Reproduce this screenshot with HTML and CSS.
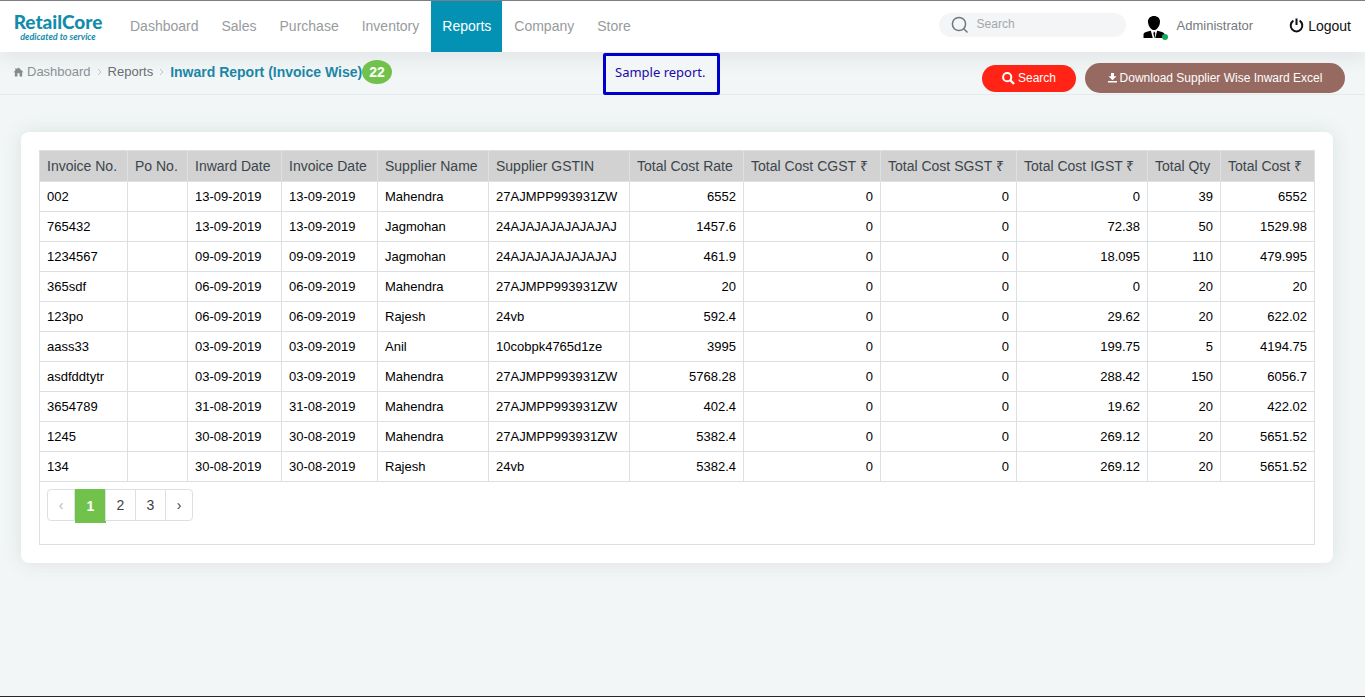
FILE: index.html
```html
<!DOCTYPE html>
<html lang="en">
<head>
<meta charset="utf-8">
<meta name="viewport" content="width=device-width, initial-scale=1">
<title>RetailCore - Inward Report</title>
<link rel="stylesheet" href="styles.css">
</head>
<body>
<header class="topbar">
  <a class="logo" href="#"><span class="logo-name">RetailCore</span><span class="logo-tag">dedicated to service</span></a>
  <nav class="nav">
    <a href="#">Dashboard</a><a href="#">Sales</a><a href="#">Purchase</a><a href="#">Inventory</a><a class="active" href="#">Reports</a><a href="#">Company</a><a href="#">Store</a>
  </nav>
  <label class="searchbox">
    <svg width="18" height="18" viewBox="0 0 18 18" fill="none" stroke="#70787d" stroke-width="1.5" aria-hidden="true"><circle cx="8" cy="8" r="6.6"/><path d="M12.8 12.8L16.5 16.5"/></svg>
    <input type="text" placeholder="Search" aria-label="Search">
  </label>
  <a class="user" href="#">
    <span class="avatar">
      <svg width="25" height="25" viewBox="0 0 25 25" aria-hidden="true"><path d="M11 1C7.400 1 4.900 3.300 5 6.800c.1 2.900 1.200 5.300 3 6.900.8.800 1.900 1.300 3 1.300s2.200-.5 3-1.300c1.800-1.600 2.900-4 3-6.900C17.100 3.300 14.600 1 11 1z"/><path d="M.5 23v-3c0-1.800.9-2.600 2.500-3l4.500-1.300L11 17l3.500-1.300L19 17c1.600.4 2.500 1.200 2.500 3v3z"/><path d="M7.800 15.600l2 7.400h1.500L10.300 18l.7-1-1-1zM14.200 15.600l-2 7.400h-.6L12.300 18l-.7-1 .8-1z" fill="#fff"/></svg>
      <span class="status"></span>
    </span>
    Administrator
  </a>
  <a class="logout" href="#">
    <svg width="15" height="15" viewBox="0 0 15 15" fill="none" stroke="#111" stroke-width="2" aria-hidden="true"><path d="M4.400 2.700a5.800 5.800 0 1 0 6.200 0M7.500.5v6.500"/></svg>
    Logout
  </a>
</header>
<section class="subbar">
  <nav class="crumbs" aria-label="Breadcrumb">
    <a class="home" href="#"><svg width="11" height="10" viewBox="0 0 12 11" fill="#848b8f" aria-hidden="true"><path d="M6 .5L11.500 5.700H10V10.500H7.200V7H4.800v3.500H2V5.700H.5L2.500 3.800V1.500H4v1z"/></svg>Dashboard</a>
    <svg class="sep" width="5" height="8" viewBox="0 0 5 8" aria-hidden="true"><path d="M1 1l3 3-3 3"/></svg>
    <a class="dark" href="#">Reports</a>
    <svg class="sep" width="5" height="8" viewBox="0 0 5 8" aria-hidden="true"><path d="M1 1l3 3-3 3"/></svg>
    <h1 class="title">Inward Report (Invoice Wise)</h1><span class="count">22</span>
  </nav>
  <div class="note">Sample report.</div>
  <div class="actions">
    <button class="btn btn-search" type="button"><svg width="13" height="13" viewBox="0 0 13 13" fill="none" stroke="#fff" stroke-width="2" aria-hidden="true"><circle cx="5.200" cy="5.200" r="4.100"/><path d="M8.200 8.200l3.800 3.800" stroke-width="2.400"/></svg>Search</button>
    <button class="btn btn-download" type="button"><svg width="9" height="10" viewBox="0 0 9 10" fill="#fff" aria-hidden="true"><path d="M3 0h3v3.300h2.500L4.500 7.300.5 3.300H3zM0 8h9v1.500H0z"/></svg>Download Supplier Wise Inward Excel</button>
  </div>
</section>
<main class="main">
  <div class="card">
    <table class="report">
      <colgroup><col class="w88"><col class="w60"><col class="w94"><col class="w96"><col class="w111"><col class="w141"><col class="w114"><col class="w137"><col class="w136"><col class="w131"><col class="w73"><col class="w94"></colgroup>
      <thead><tr><th>Invoice No.</th><th>Po No.</th><th>Inward Date</th><th>Invoice Date</th><th>Supplier Name</th><th>Supplier GSTIN</th><th>Total Cost Rate</th><th>Total Cost CGST ₹</th><th>Total Cost SGST ₹</th><th>Total Cost IGST ₹</th><th>Total Qty</th><th>Total Cost ₹</th></tr></thead>
      <tbody>
        <tr><td>002</td><td></td><td>13-09-2019</td><td>13-09-2019</td><td>Mahendra</td><td>27AJMPP993931ZW</td><td>6552</td><td>0</td><td>0</td><td>0</td><td>39</td><td>6552</td></tr>
        <tr><td>765432</td><td></td><td>13-09-2019</td><td>13-09-2019</td><td>Jagmohan</td><td>24AJAJAJAJAJAJAJ</td><td>1457.6</td><td>0</td><td>0</td><td>72.38</td><td>50</td><td>1529.98</td></tr>
        <tr><td>1234567</td><td></td><td>09-09-2019</td><td>09-09-2019</td><td>Jagmohan</td><td>24AJAJAJAJAJAJAJ</td><td>461.9</td><td>0</td><td>0</td><td>18.095</td><td>110</td><td>479.995</td></tr>
        <tr><td>365sdf</td><td></td><td>06-09-2019</td><td>06-09-2019</td><td>Mahendra</td><td>27AJMPP993931ZW</td><td>20</td><td>0</td><td>0</td><td>0</td><td>20</td><td>20</td></tr>
        <tr><td>123po</td><td></td><td>06-09-2019</td><td>06-09-2019</td><td>Rajesh</td><td>24vb</td><td>592.4</td><td>0</td><td>0</td><td>29.62</td><td>20</td><td>622.02</td></tr>
        <tr><td>aass33</td><td></td><td>03-09-2019</td><td>03-09-2019</td><td>Anil</td><td>10cobpk4765d1ze</td><td>3995</td><td>0</td><td>0</td><td>199.75</td><td>5</td><td>4194.75</td></tr>
        <tr><td>asdfddtytr</td><td></td><td>03-09-2019</td><td>03-09-2019</td><td>Mahendra</td><td>27AJMPP993931ZW</td><td>5768.28</td><td>0</td><td>0</td><td>288.42</td><td>150</td><td>6056.7</td></tr>
        <tr><td>3654789</td><td></td><td>31-08-2019</td><td>31-08-2019</td><td>Mahendra</td><td>27AJMPP993931ZW</td><td>402.4</td><td>0</td><td>0</td><td>19.62</td><td>20</td><td>422.02</td></tr>
        <tr><td>1245</td><td></td><td>30-08-2019</td><td>30-08-2019</td><td>Mahendra</td><td>27AJMPP993931ZW</td><td>5382.4</td><td>0</td><td>0</td><td>269.12</td><td>20</td><td>5651.52</td></tr>
        <tr><td>134</td><td></td><td>30-08-2019</td><td>30-08-2019</td><td>Rajesh</td><td>24vb</td><td>5382.4</td><td>0</td><td>0</td><td>269.12</td><td>20</td><td>5651.52</td></tr>
      </tbody>
      <tfoot><tr><td class="pager-cell" colspan="12">
        <nav class="pager" aria-label="Pages"><button class="edge" type="button" disabled>‹</button><button class="current" type="button">1</button><button type="button">2</button><button type="button">3</button><button class="edge" type="button">›</button></nav>
      </td></tr></tfoot>
    </table>
  </div>
</main>
<div class="baseline"></div>
</body>
</html>
```
FILE: styles.css
```css
* { box-sizing: border-box; }
body {
  margin: 0;
  min-height: 100vh;
  display: flex;
  flex-direction: column;
  background: #f2f6f7;
  border-top: 1px solid #7b7e84;
  font: 14px/20px "Liberation Sans", Arial, sans-serif;
  color: #111;
}
a { color: inherit; text-decoration: none; }
button, input { font: inherit; }
.topbar {
  position: relative;
  z-index: 1;
  display: flex;
  align-items: center;
  height: 51px;
  padding: 0 14px;
  background: #fff;
  box-shadow: 0 8px 16px rgba(60, 70, 70, 0.08);
}
.logo { display: flex; flex-direction: column; align-items: center; width: 88px; color: #118cab; white-space: nowrap; }
.logo-name { font: 900 19px/20px Lato, sans-serif; }
.logo-tag { font: italic bold 9px/9px Lato, sans-serif; }
.nav { display: flex; gap: 1px; align-self: stretch; align-items: center; margin-left: 17px; color: #979b9d; }
.nav a { padding: 0 11px; line-height: 51px; }
.nav .active { background: #0492b4; color: #fff; }
.searchbox {
  display: flex;
  align-items: center;
  gap: 8px;
  width: 187px;
  height: 24px;
  margin: 0 17px 4px auto;
  padding: 0 12px;
  border-radius: 12px;
  background: #f3f5f7;
}
.searchbox svg { flex: none; }
.searchbox input { width: 100%; min-width: 0; height: 20px; padding: 0 0 2px; border: 0; outline: 0; background: none; font-size: 12px; color: #444; }
.searchbox input::placeholder { color: #a3a7aa; opacity: 1; }
.user { display: flex; align-items: center; gap: 9px; padding-bottom: 1px; color: #74797c; font-size: 13px; }
.avatar { position: relative; display: flex; padding-top: 2px; }
.status { position: absolute; right: 0; bottom: 0; width: 6px; height: 6px; border-radius: 50%; background: #12ab5c; }
.logout { display: flex; align-items: center; gap: 4px; margin-left: 36px; padding-bottom: 2px; }
.subbar {
  position: relative;
  z-index: 2;
  display: flex;
  justify-content: space-between;
  height: 43px;
  padding: 0 20px 0 13px;
  border-bottom: 1px solid #e6eaec;
}
.crumbs { display: flex; align-items: center; height: 40px; color: #8b9194; font-size: 13px; white-space: nowrap; }
.crumbs .home { display: flex; align-items: center; gap: 3px; }
.crumbs .dark { color: #686e72; }
.sep { margin: 0 6px; fill: none; stroke: #bfc6ca; }
.title { margin: 0; color: #1b86a6; font-size: 14px; line-height: 20px; }
.count { padding: 2px 7px; border-radius: 50%; background: #71c24b; color: #fff; font-size: 14px; font-weight: bold; }
.note {
  position: absolute;
  left: 603px;
  top: 1px;
  padding: 6px 11px 10px 9px;
  border: 3px solid #0000cd;
  border-radius: 2px;
  background: #f2f6f7;
  color: #1a0aa8;
  font: 13px/20px "Noto Sans", sans-serif;
}
.actions { display: flex; align-items: center; gap: 9px; height: 52px; }
.btn { display: flex; align-items: center; justify-content: center; border: 0; border-radius: 15px; color: #fff; font-size: 12px; white-space: nowrap; }
.btn-search { width: 94px; height: 27px; gap: 3px; background: #ff2415; }
.btn-download { width: 260px; height: 30px; gap: 3px; background: #966a61; }
.main { flex: 1; padding: 37px 32px 24px 21px; }
.card { padding: 18px; border-radius: 8px; background: #fff; box-shadow: 0 0 20px rgba(60, 70, 70, 0.12); }
.report { width: 100%; border-collapse: collapse; white-space: nowrap; table-layout: fixed; }
.report th, .report td { height: 30px; padding: 0 7px; border: 1px solid #dde0e2; text-align: left; font-size: 13px; line-height: 20px; color: #000; }
.report th { height: 31px; background: #d2d2d2; color: #3c454b; font-size: 14px; font-weight: normal; }
.report tbody td:nth-child(n+7) { text-align: right; }
.w60 { width: 60px; } .w73 { width: 73px; } .w88 { width: 88px; } .w94 { width: 94px; }
.w96 { width: 96px; } .w111 { width: 111px; } .w114 { width: 114px; } .w131 { width: 131px; }
.w136 { width: 136px; } .w137 { width: 137px; } .w141 { width: 141px; }
.report .pager-cell { height: 63px; padding: 7px; vertical-align: top; }
.pager { display: flex; align-items: flex-start; }
.pager button { width: 31px; height: 32px; margin-left: -1px; padding: 0; border: 1px solid #dde0e2; background: #fff; color: #3b4145; font-size: 14px; }
.pager .edge { width: 28px; }
.pager button:first-child { margin-left: 0; border-radius: 4px 0 0 4px; color: #b5babd; }
.pager button:last-child { border-radius: 0 4px 4px 0; }
.pager .current { height: 34px; margin: 0; border-color: #71c24b; background: #71c24b; color: #fff; font-weight: bold; }
.baseline { height: 1px; background: #25272a; }
```
